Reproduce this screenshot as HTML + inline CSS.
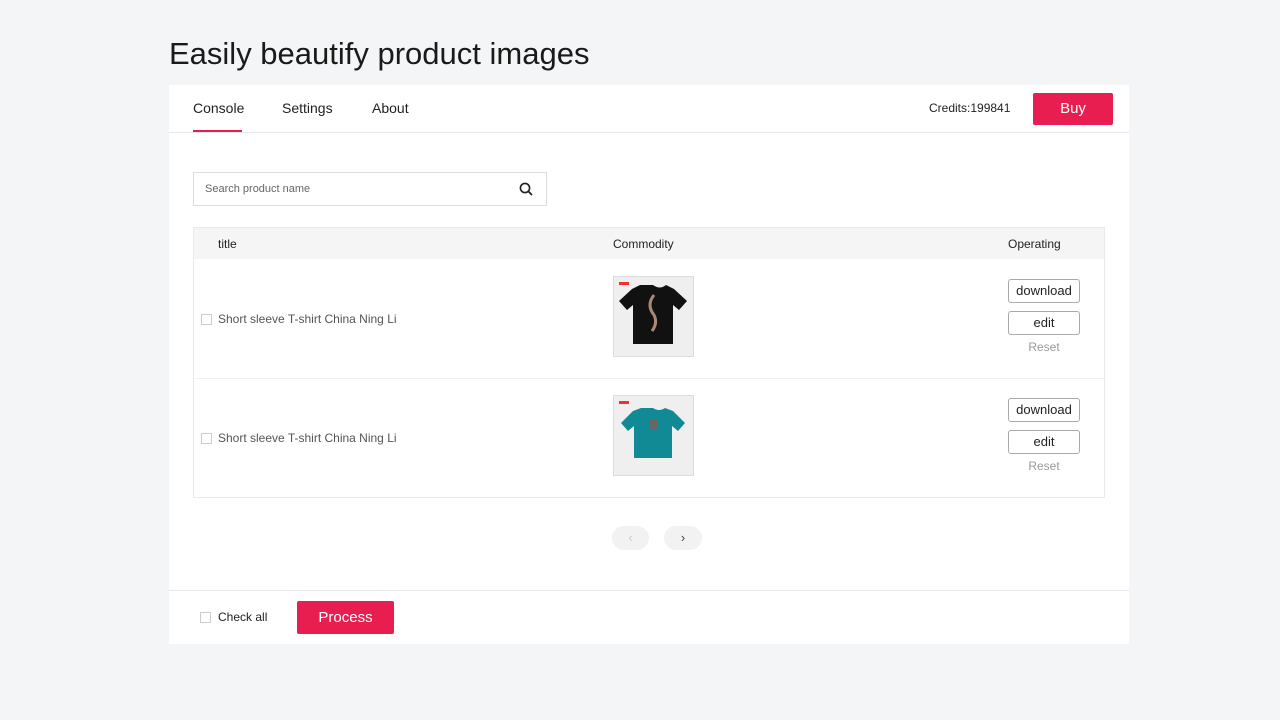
<!DOCTYPE html>
<html><head><style>
*{box-sizing:border-box;margin:0;padding:0}
body{width:1280px;height:720px;background:#f4f5f7;font-family:"Liberation Sans",sans-serif;position:relative;overflow:hidden;color:#222}
.abs{position:absolute}
h1{position:absolute;left:169px;top:36px;font-size:31px;font-weight:normal;color:#1a1a1a}
.card{position:absolute;left:169px;top:85px;width:960px;height:559px;background:#fff}
.btn{position:absolute;background:#e91e50;color:#fff;border-radius:2px;text-align:center;font-size:15px}
.ob{position:absolute;left:1008px;width:72px;height:24px;border:1px solid #aaa;border-radius:3px;font-size:13px;text-align:center;line-height:22px;color:#222;background:#fff}
.cb{position:absolute;width:11px;height:11px;border:1px solid #ccc;background:#fff}
.img{position:absolute;left:613px;width:81px;height:81px;background:#efefef;border:1px solid #ddd}
</style></head><body>
<h1>Easily beautify product images</h1>
<div class="card"></div>
<div class="abs" style="left:193px;top:100px;font-size:14px">Console</div>
<div class="abs" style="left:282px;top:100px;font-size:14px">Settings</div>
<div class="abs" style="left:372px;top:100px;font-size:14px">About</div>
<div class="abs" style="left:193px;top:130px;width:49px;height:2px;background:#e91e50"></div>
<div class="abs" style="left:169px;top:132px;width:960px;height:1px;background:#e6e8ec"></div>
<div class="abs" style="left:929px;top:101px;font-size:12px">Credits:199841</div>
<div class="btn" style="left:1033px;top:93px;width:80px;height:32px;line-height:32px">Buy</div>
<div class="abs" style="left:193px;top:172px;width:354px;height:34px;border:1px solid #ddd"></div>
<div class="abs" style="left:205px;top:183px;font-size:11px;color:#666">Search product name</div>
<svg class="abs" style="left:519px;top:182px" width="14" height="14" viewBox="0 0 14 14"><circle cx="6" cy="6" r="4.6" fill="none" stroke="#222" stroke-width="1.6"/><path d="M9.5 9.5L13 13" stroke="#222" stroke-width="1.8"/></svg>
<div class="abs" style="left:193px;top:227px;width:912px;height:271px;border:1px solid #eaeaea"></div>
<div class="abs" style="left:194px;top:228px;width:910px;height:31px;background:#f5f5f5"></div>
<div class="abs" style="left:218px;top:237px;font-size:12px">title</div>
<div class="abs" style="left:613px;top:237px;font-size:12px">Commodity</div>
<div class="abs" style="left:1008px;top:237px;font-size:12px">Operating</div>
<div class="abs" style="left:194px;top:378px;width:910px;height:1px;background:#eef0f5"></div>
<div class="cb" style="left:201px;top:314px"></div>
<div class="abs" style="left:218px;top:312px;font-size:12px;color:#555">Short sleeve T-shirt China Ning Li</div>
<div class="cb" style="left:201px;top:433px"></div>
<div class="abs" style="left:218px;top:431px;font-size:12px;color:#555">Short sleeve T-shirt China Ning Li</div>
<div class="img" style="top:276px"><svg width="79" height="79" viewBox="0 0 79 79"><path d="M5 5h10v3H5z" fill="#e33"/><path d="M26 8l-8 4-13 12 8 9 6-5v39h40V28l6 5 8-9-13-12-8-4q-6 5-13 0z" fill="#111"/><path d="M40 18q-8 10 0 20q4 8-2 16" stroke="#a87" stroke-width="3" fill="none"/></svg></div>
<div class="img" style="top:395px"><svg width="79" height="79" viewBox="0 0 79 79"><path d="M5 5h10v3H5z" fill="#e33"/><path d="M27 12l-8 3-12 12 7 8 6-5v32h38V30l6 5 7-8-12-12-8-3q-6 4-12 0z" fill="#128a96"/><rect x="35" y="24" width="9" height="10" fill="#666"/></svg></div>
<div class="ob" style="top:279px">download</div>
<div class="ob" style="top:311px">edit</div>
<div class="abs" style="left:1008px;width:72px;top:340px;font-size:12px;color:#999;text-align:center">Reset</div>
<div class="ob" style="top:398px">download</div>
<div class="ob" style="top:430px">edit</div>
<div class="abs" style="left:1008px;width:72px;top:459px;font-size:12px;color:#999;text-align:center">Reset</div>
<div class="abs" style="left:612px;top:526px;width:37px;height:24px;border-radius:12px;background:#f2f2f2;color:#ccc;text-align:center;line-height:23px;font-size:13px">‹</div>
<div class="abs" style="left:664px;top:526px;width:38px;height:24px;border-radius:12px;background:#f2f2f2;color:#444;text-align:center;line-height:23px;font-size:13px">›</div>
<div class="abs" style="left:169px;top:590px;width:960px;height:1px;background:#e6e8ec"></div>
<div class="cb" style="left:200px;top:612px"></div>
<div class="abs" style="left:218px;top:610px;font-size:12px">Check all</div>
<div class="btn" style="left:297px;top:601px;width:97px;height:33px;line-height:33px">Process</div>
</body></html>
